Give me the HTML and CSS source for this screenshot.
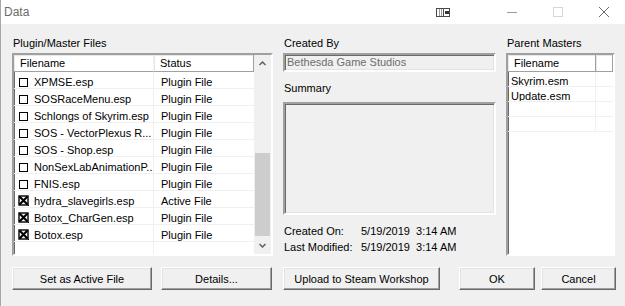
FILE: index.html
```html
<!DOCTYPE html>
<html lang="en">
<head>
    <meta charset="UTF-8">
    <title>Data</title>
    <link rel="stylesheet" href="styles.css">
</head>
<body>
    <div class="window">
        <div class="titlebar">
            <span class="title">Data</span>
            <div class="caption">
                <span class="cap-btn cap-snap">
                    <svg width="14" height="9" viewBox="0 0 14 9">
                        <rect x="0.5" y="0.5" width="13" height="8" fill="#fff" stroke="#4a4a4a"/>
                        <line x1="3.5" y1="1" x2="3.5" y2="8" stroke="#9a9a9a"/>
                        <line x1="5.5" y1="1" x2="5.5" y2="8" stroke="#9a9a9a"/>
                        <line x1="7.5" y1="0" x2="7.5" y2="9" stroke="#4a4a4a"/>
                        <rect x="9" y="3" width="4" height="3" fill="#333"/>
                    </svg>
                </span>
                <span class="cap-btn">
                    <svg width="10" height="10" viewBox="0 0 10 10"><line x1="0" y1="5.5" x2="10" y2="5.5" stroke="#9a9a9a"/></svg>
                </span>
                <span class="cap-btn">
                    <svg width="10" height="10" viewBox="0 0 10 10"><rect x="0.5" y="0.5" width="9" height="9" fill="none" stroke="#d6d6d6"/></svg>
                </span>
                <span class="cap-btn">
                    <svg width="10" height="10" viewBox="0 0 10 10"><path d="M0 0 L10 10 M10 0 L0 10" stroke="#6a6a6a" stroke-width="1"/></svg>
                </span>
            </div>
        </div>

        <div class="content">
            <div class="columns">
                <div class="col col-files">
                    <div class="label">Plugin/Master Files</div>
                    <div class="listbox">
                        <div class="grid">
                            <div class="head">
                                <div class="hc c-name">Filename</div>
                                <div class="hc c-status">Status</div>
                            </div>
                            <div class="row"><div class="cell c-name"><span class="chk"></span>XPMSE.esp</div><div class="cell c-status">Plugin File</div></div>
                            <div class="row"><div class="cell c-name"><span class="chk"></span>SOSRaceMenu.esp</div><div class="cell c-status">Plugin File</div></div>
                            <div class="row"><div class="cell c-name"><span class="chk"></span>Schlongs of Skyrim.esp</div><div class="cell c-status">Plugin File</div></div>
                            <div class="row"><div class="cell c-name"><span class="chk"></span>SOS - VectorPlexus R...</div><div class="cell c-status">Plugin File</div></div>
                            <div class="row"><div class="cell c-name"><span class="chk"></span>SOS - Shop.esp</div><div class="cell c-status">Plugin File</div></div>
                            <div class="row"><div class="cell c-name"><span class="chk"></span>NonSexLabAnimationP...</div><div class="cell c-status">Plugin File</div></div>
                            <div class="row"><div class="cell c-name"><span class="chk"></span>FNIS.esp</div><div class="cell c-status">Plugin File</div></div>
                            <div class="row"><div class="cell c-name"><svg class="chk-x" width="11" height="11" viewBox="0 0 11 11"><rect x="1" y="1" width="9" height="9" fill="#fff" stroke="#000" stroke-width="1.4"/><path d="M1.5 1.5 L9.5 9.5 M9.5 1.5 L1.5 9.5" stroke="#000" stroke-width="2.2"/><rect x="10" y="10" width="1" height="1" fill="#000"/></svg>hydra_slavegirls.esp</div><div class="cell c-status">Active File</div></div>
                            <div class="row"><div class="cell c-name"><svg class="chk-x" width="11" height="11" viewBox="0 0 11 11"><rect x="1" y="1" width="9" height="9" fill="#fff" stroke="#000" stroke-width="1.4"/><path d="M1.5 1.5 L9.5 9.5 M9.5 1.5 L1.5 9.5" stroke="#000" stroke-width="2.2"/><rect x="10" y="10" width="1" height="1" fill="#000"/></svg>Botox_CharGen.esp</div><div class="cell c-status">Plugin File</div></div>
                            <div class="row"><div class="cell c-name"><svg class="chk-x" width="11" height="11" viewBox="0 0 11 11"><rect x="1" y="1" width="9" height="9" fill="#fff" stroke="#000" stroke-width="1.4"/><path d="M1.5 1.5 L9.5 9.5 M9.5 1.5 L1.5 9.5" stroke="#000" stroke-width="2.2"/><rect x="10" y="10" width="1" height="1" fill="#000"/></svg>Botox.esp</div><div class="cell c-status">Plugin File</div></div>
                            <div class="row"><div class="cell c-name"></div><div class="cell c-status"></div></div>
                        </div>
                        <div class="scrollbar">
                            <div class="arrow">
                                <svg width="7" height="5" viewBox="0 0 7 5"><polyline points="0.5,4 3.5,1 6.5,4" fill="none" stroke="#606060" stroke-width="1.5"/></svg>
                            </div>
                            <div class="track"><div class="thumb"></div></div>
                            <div class="arrow">
                                <svg width="7" height="5" viewBox="0 0 7 5"><polyline points="0.5,1 3.5,4 6.5,1" fill="none" stroke="#606060" stroke-width="1.5"/></svg>
                            </div>
                        </div>
                    </div>
                </div>

                <div class="col col-info">
                    <div class="label">Created By</div>
                    <div class="textbox">Bethesda Game Studios</div>
                    <div class="label label-summary">Summary</div>
                    <div class="summary"></div>
                    <div class="dates">
                        <div class="date-row"><span class="date-label">Created On:</span><span>5/19/2019&nbsp; 3:14 AM</span></div>
                        <div class="date-row"><span class="date-label">Last Modified:</span><span>5/19/2019&nbsp; 3:14 AM</span></div>
                    </div>
                </div>

                <div class="col col-masters">
                    <div class="label">Parent Masters</div>
                    <div class="listbox masters">
                        <div class="grid">
                            <div class="head">
                                <div class="hc m-name">Filename</div>
                                <div class="hc m-extra"></div>
                            </div>
                            <div class="mrow"><div class="cell m-name">Skyrim.esm</div><div class="cell m-extra"></div></div>
                            <div class="mrow"><div class="cell m-name">Update.esm</div><div class="cell m-extra"></div></div>
                            <div class="mrow"><div class="cell m-name"></div><div class="cell m-extra"></div></div>
                            <div class="mrow"><div class="cell m-name"></div><div class="cell m-extra"></div></div>
                        </div>
                    </div>
                </div>
            </div>

            <div class="buttons">
                <button class="btn btn-active">Set as Active File</button>
                <button class="btn btn-details">Details...</button>
                <button class="btn btn-upload">Upload to Steam Workshop</button>
                <button class="btn btn-ok">OK</button>
                <button class="btn btn-cancel">Cancel</button>
            </div>
        </div>
    </div>
</body>
</html>
```

FILE: styles.css
```css
* {
    box-sizing: border-box;
}
body {
    margin: 0;
    font-family: "Liberation Sans", Arial, sans-serif;
    font-size: 11px;
    color: #000;
    background-color: #f0f0f0;
}
.window {
    width: 625px;
    height: 306px;
    overflow: hidden;
    background-color: #f0f0f0;
    border-left: 1px solid #a8a8a8;
}
.titlebar {
    height: 24px;
    background-color: #fff;
    display: flex;
    align-items: center;
}
.title {
    padding-left: 3px;
    font-size: 12px;
    color: #6b6b6b;
}
.caption {
    margin-left: auto;
    margin-right: -2px;
    display: flex;
}
.cap-btn {
    width: 46px;
    height: 24px;
    display: flex;
    align-items: center;
    justify-content: center;
}
.cap-snap {
    margin-right: 23px;
}
.content {
    padding: 12px 0 0 11px;
}
.columns {
    display: flex;
    gap: 10px;
}
.label {
    height: 17px;
    line-height: 15px;
    padding-left: 1px;
}
.col-files {
    width: 261px;
}
.col-info {
    width: 213px;
}
.col-masters {
    width: 109px;
}

/* list boxes */
.listbox {
    height: 203px;
    display: flex;
    background-color: #fff;
    border: 2px solid;
    border-color: #a0a0a0 #fff #fff #a0a0a0;
    box-shadow: inset 1px 1px #696969;
    overflow: hidden;
}
.grid {
    flex: 1;
    overflow: hidden;
}
.head {
    display: flex;
    height: 17px;
}
.hc {
    height: 17px;
    line-height: 15px;
    padding: 1px 0 0 6px;
    background-color: #fff;
    border-right: 1px solid #a0a0a0;
    border-bottom: 1px solid #a0a0a0;
    box-shadow: inset 1px 1px #e8e8e8;
}
.row, .mrow {
    display: flex;
}
.row {
    height: 17px;
}
.mrow {
    height: 15px;
}
.cell {
    display: flex;
    align-items: center;
    padding-top: 3px;
    border-bottom: 1px solid #f0f0f0;
    white-space: nowrap;
    overflow: hidden;
}
.mrow .cell {
    padding-top: 4px;
}
.c-name {
    width: 140px;
    border-right: 1px solid #f0f0f0;
}
.c-status {
    width: 100px;
    padding-left: 6px;
}
.cell.c-status {
    padding-left: 7px;
}
.chk {
    width: 9px;
    height: 9px;
    margin: 1px 6px 0 5px;
    border: 1px solid #000;
    background-color: #fff;
    flex: none;
}
.chk-x {
    margin: 0 5px 0 4px;
    flex: none;
}
.scrollbar {
    width: 17px;
    display: flex;
    flex-direction: column;
    background-color: #f0f0f0;
}
.arrow {
    height: 17px;
    display: flex;
    align-items: center;
    justify-content: center;
}
.track {
    flex: 1;
    padding-top: 81px;
}
.thumb {
    height: 83px;
    margin: 0 1px;
    background-color: #cdcdcd;
}

/* parent masters */
.m-name {
    width: 88px;
    border-right: 1px solid #f0f0f0;
}
.hc.m-name {
    border-right-color: #a0a0a0;
}
.cell.m-name {
    padding-left: 3px;
}
.m-extra {
    flex: 1;
}
.hc.m-extra {
    padding: 0;
}

/* created by / summary */
.textbox {
    height: 19px;
    line-height: 15px;
    padding-left: 2px;
    color: #6d6d6d;
    border: 2px solid;
    border-color: #a0a0a0 #fff #fff #a0a0a0;
    box-shadow: inset 1px 1px #696969, inset -1px -1px #e3e3e3;
}
.label-summary {
    height: 30px;
    padding-top: 9px;
}
.summary {
    height: 113px;
    border: 2px solid;
    border-color: #a0a0a0 #fff #fff #a0a0a0;
    box-shadow: inset 1px 1px #696969, inset -1px -1px #e3e3e3;
}
.dates {
    padding-top: 8px;
    padding-left: 1px;
}
.date-row {
    display: flex;
    height: 16px;
    line-height: 16px;
}
.date-label {
    width: 77px;
}

/* buttons */
.buttons {
    display: flex;
    margin-top: 11px;
}
.btn {
    height: 23px;
    padding: 0;
    font-family: "Liberation Sans", Arial, sans-serif;
    font-size: 11px;
    color: #000;
    background-color: #f0f0f0;
    border: 1px solid;
    border-color: #fff #696969 #696969 #fff;
    box-shadow: inset -1px -1px #a0a0a0, inset 1px 1px #e3e3e3;
}
.btn-active {
    width: 140px;
}
.btn-details {
    width: 111px;
    margin-left: 9px;
}
.btn-upload {
    width: 157px;
    margin-left: 11px;
}
.btn-ok {
    width: 76px;
    margin-left: 19px;
}
.btn-cancel {
    width: 75px;
    margin-left: 6px;
}
```
